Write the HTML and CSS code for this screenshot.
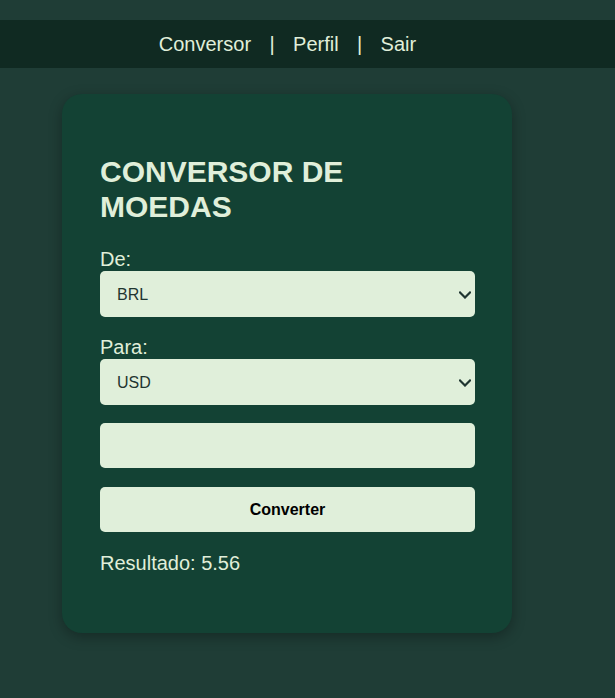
FILE: index.html
```html
<!DOCTYPE html>
<html lang="pt-BR">
<head>
<meta charset="utf-8">
<title>Conversor de Moedas</title>
<link rel="stylesheet" href="styles.css">
</head>
<body>
<nav class="topnav">
  <a class="nav-link" href="#">Conversor</a>
  <span class="nav-sep">|</span>
  <a class="nav-link" href="#">Perfil</a>
  <span class="nav-sep">|</span>
  <a class="nav-link" href="#">Sair</a>
</nav>
<main class="page">
  <section class="card">
    <h2 class="card-title">CONVERSOR DE MOEDAS</h2>
    <label class="field-label" for="de">De:</label>
    <div class="select-wrap first-select">
      <select id="de" class="field field-select">
        <option>BRL</option>
        <option>USD</option>
        <option>EUR</option>
      </select>
      <svg class="chevron" width="12" height="8" viewBox="0 0 12 8" aria-hidden="true"><path d="M1 1.5 L6 6.5 L11 1.5" fill="none" stroke="#1f3530" stroke-width="2.2" stroke-linecap="square"/></svg>
    </div>
    <label class="field-label" for="para">Para:</label>
    <div class="select-wrap second-select">
      <select id="para" class="field field-select">
        <option>USD</option>
        <option>BRL</option>
        <option>EUR</option>
      </select>
      <svg class="chevron" width="12" height="8" viewBox="0 0 12 8" aria-hidden="true"><path d="M1 1.5 L6 6.5 L11 1.5" fill="none" stroke="#1f3530" stroke-width="2.2" stroke-linecap="square"/></svg>
    </div>
    <input class="field field-input" type="number">
    <button class="btn" type="button">Converter</button>
    <p class="result">Resultado: 5.56</p>
  </section>
</main>
</body>
</html>
```

FILE: styles.css
```css
html, body {
  margin: 0;
  padding: 0;
}
body {
  background: #1f3d36;
  font-family: "Liberation Sans", Arial, sans-serif;
  color: #e0efda;
  padding-top: 20px;
  min-height: 678px;
}
.topnav {
  background: #102a22;
  height: 48px;
  box-sizing: border-box;
  padding: 12px 40px 12px 0;
  display: flex;
  justify-content: center;
  align-items: center;
  font-size: 20px;
  line-height: 23px;
}
.nav-link {
  color: #e0efda;
  text-decoration: none;
}
.nav-sep {
  margin: 0 18.4px;
  color: #e0efda;
}
.page {
  padding: 26px 41px 0 0;
  display: flex;
  justify-content: center;
}
.card {
  width: 450px;
  box-sizing: border-box;
  background: #134234;
  border-radius: 20px;
  padding: 61px 37px 58px 38px;
  box-shadow: 0 4px 14px rgba(0, 0, 0, 0.3);
  display: flex;
  flex-direction: column;
}
.card-title {
  margin: 0 0 24px 0;
  font-size: 30px;
  line-height: 34.5px;
  font-weight: bold;
  color: #e0efda;
}
.field-label {
  display: block;
  font-size: 20px;
  line-height: 23px;
}
.field {
  display: block;
  width: 100%;
  box-sizing: border-box;
  background-color: #e0efda;
  border: none;
  border-radius: 5px;
  font-family: "Liberation Sans", Arial, sans-serif;
  font-size: 16px;
  color: #1f3530;
  outline: none;
}
.select-wrap {
  position: relative;
}
.field-select {
  height: 46px;
  padding: 0 30px 0 17px;
  appearance: none;
  -webkit-appearance: none;
}
.chevron {
  position: absolute;
  right: 4px;
  top: 20px;
  pointer-events: none;
}
.first-select {
  margin-bottom: 19px;
}
.second-select {
  margin-bottom: 18px;
}
.field-input {
  height: 45px;
  padding: 0 16px;
  margin-bottom: 19px;
}
.btn {
  height: 45px;
  border: none;
  border-radius: 5px;
  background: #e0efda;
  color: #000;
  font-family: "Liberation Sans", Arial, sans-serif;
  font-size: 16px;
  font-weight: bold;
  margin-bottom: 20px;
  cursor: pointer;
}
.result {
  margin: 0;
  font-size: 20px;
  line-height: 23px;
}
```
